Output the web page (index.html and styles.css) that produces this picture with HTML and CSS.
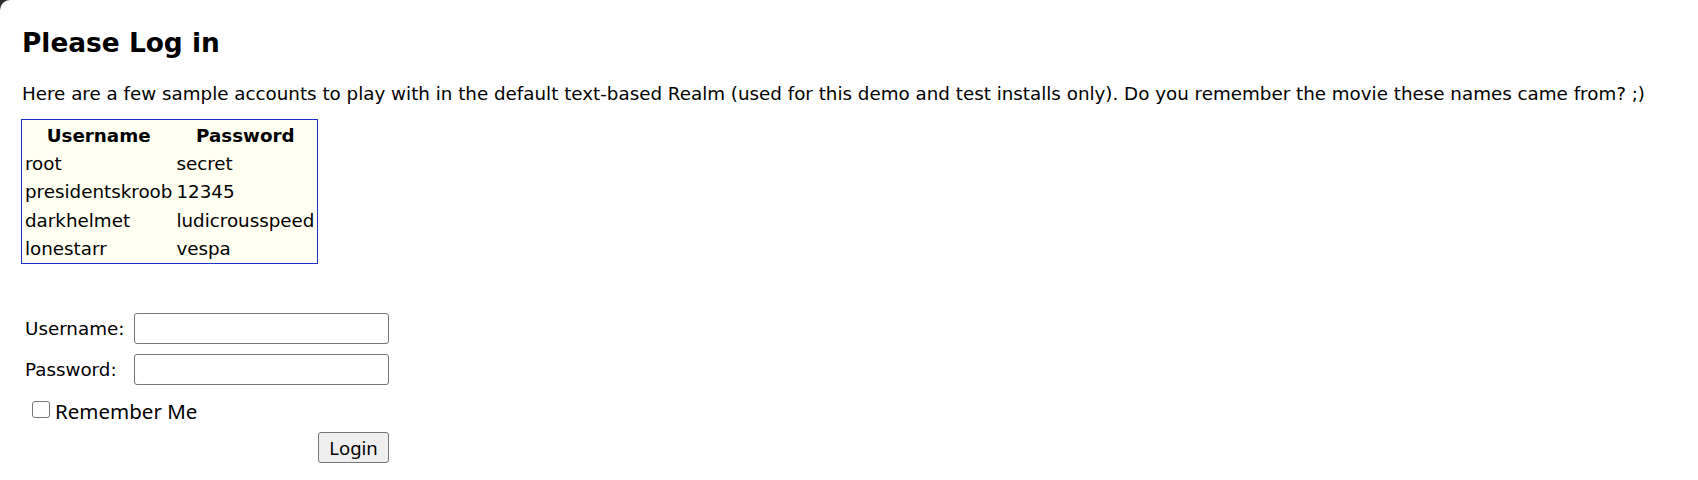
FILE: index.html
```html
<!DOCTYPE html>
<html lang="en">
<head>
<meta charset="utf-8">
<title>Please Log in</title>
<link rel="stylesheet" href="styles.css">
</head>
<body>
<div class="page">
  <h1 class="title">Please Log in</h1>
  <p class="intro">Here are a few sample accounts to play with in the default text-based Realm (used for this demo and test installs only). Do you remember the movie these names came from? ;)</p>
  <table class="accounts">
    <thead>
      <tr><th>Username</th><th>Password</th></tr>
    </thead>
    <tbody>
      <tr><td>root</td><td>secret</td></tr>
      <tr><td>presidentskroob</td><td>12345</td></tr>
      <tr><td>darkhelmet</td><td>ludicrousspeed</td></tr>
      <tr><td>lonestarr</td><td>vespa</td></tr>
    </tbody>
  </table>
  <form class="login" action="#" onsubmit="return false;">
    <div class="fields">
      <label class="field-label" for="username">Username:</label>
      <input class="text-input" type="text" id="username" name="username">
      <label class="field-label" for="password">Password:</label>
      <input class="text-input" type="password" id="password" name="password">
    </div>
    <label class="remember"><input class="check" type="checkbox" name="rememberMe"><span class="remember-text">Remember Me</span></label>
    <div class="actions"><button class="login-btn" type="submit">Login</button></div>
  </form>
</div>
</body>
</html>
```
FILE: styles.css
```css
html {
  background: #2e2e2e;
}
body {
  margin: 0;
}
.page {
  background: #ffffff;
  border-top-left-radius: 10px;
  min-height: 100vh;
  box-sizing: border-box;
  padding: 1px 21px 0 21px;
  font-family: "DejaVu Sans", Verdana, sans-serif;
  font-size: 18.3px;
  color: #000;
}
.title {
  font-size: 26.4px;
  font-weight: bold;
  line-height: 32px;
  margin: 25.5px 0 0 1px;
}
.intro {
  margin: 24.5px 0 0 1px;
  line-height: 22px;
}
.accounts {
  margin-top: 14px;
  border: 1px solid #1f32c8;
  background: #fffff2;
  border-spacing: 2px;
}
.accounts th,
.accounts td {
  padding: 2px 1px 0 1px;
  line-height: 24.2px;
}
.accounts th {
  font-weight: bold;
  text-align: center;
}
.accounts td {
  text-align: left;
}
.login {
  margin: 49px 0 0 4px;
  width: 364px;
}
.fields {
  display: grid;
  grid-template-columns: 96px 255px;
  column-gap: 13px;
  row-gap: 10px;
  align-items: center;
}
.field-label {
  white-space: nowrap;
}
.text-input {
  box-sizing: border-box;
  width: 255px;
  height: 31px;
  margin: 0;
  border: 1px solid #767676;
  border-radius: 3px;
  background: #fff;
  font-size: 16px;
}
.remember {
  display: flex;
  align-items: flex-start;
  margin: 14px 0 0 7px;
  line-height: 24px;
  font-family: "Noto Sans", "Open Sans", sans-serif;
  font-size: 20.5px;
}
.check {
  appearance: none;
  -webkit-appearance: none;
  box-sizing: border-box;
  width: 18px;
  height: 17px;
  margin: 2px 5px 0 0;
  border: 1px solid #767676;
  border-radius: 3px;
  background: #fff;
}
.actions {
  display: flex;
  justify-content: flex-end;
  margin-top: 9px;
}
.login-btn {
  box-sizing: border-box;
  width: 71px;
  height: 31px;
  margin: 0;
  padding: 0;
  border: 1px solid #767676;
  border-radius: 3px;
  background: #efefef;
  color: #000;
  font-family: "Noto Sans", "Open Sans", sans-serif;
  font-size: 18.5px;
}
```
